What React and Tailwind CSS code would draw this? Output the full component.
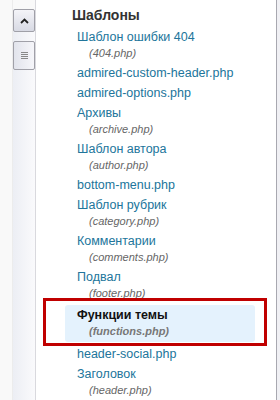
import React from "react";

const items = [
  { name: "Шаблон ошибки 404", sub: "(404.php)" },
  { name: "admired-custom-header.php" },
  { name: "admired-options.php" },
  { name: "Архивы", sub: "(archive.php)" },
  { name: "Шаблон автора", sub: "(author.php)" },
  { name: "bottom-menu.php" },
  { name: "Шаблон рубрик", sub: "(category.php)" },
  { name: "Комментарии", sub: "(comments.php)" },
  { name: "Подвал", sub: "(footer.php)" },
  { name: "Функции темы", sub: "(functions.php)", active: true },
  { name: "header-social.php" },
  { name: "Заголовок", sub: "(header.php)" },
];

function Item({ it }) {
  if (it.active) {
    return (
      <li className="relative my-[2px] rounded-[3px] bg-[#e4f2fd] pt-[2px] pb-[3px]">
        <div className="pl-[12px] text-[12.5px] font-bold leading-[16px] text-[#111]">{it.name}</div>
        <div className="pl-[24px] text-[11px] font-bold italic leading-[16px] text-[#777]">{it.sub}</div>
        <div className="pointer-events-none absolute left-[-22px] right-[-12px] top-[-7px] bottom-[-4px] border-[3px] border-[#c00000]" />
      </li>
    );
  }
  return (
    <li className="py-[2px]">
      <div className="pl-[12px] text-[12.5px] leading-[16px] text-[#21759b]">{it.name}</div>
      {it.sub && (
        <div className="pl-[24px] text-[11px] italic leading-[16px] text-[#666]">{it.sub}</div>
      )}
    </li>
  );
}

export default function App() {
  return (
    <div
      className="flex h-[400px] w-[280px] overflow-hidden bg-white"
      style={{ fontFamily: '"Liberation Sans", Arial, sans-serif' }}
    >
      <div className="w-[13px] shrink-0 border-r border-[#ececec] bg-[#f9f9f9]" />
      <div className="flex w-[23px] shrink-0 flex-col border-r border-[#d9d9de] bg-gradient-to-r from-[#eceef4] to-[#fafafc]">
        <div className="h-[9px] bg-[#f9f9f9]" />
        <div className="flex h-[23px] items-center justify-center rounded-[2px] border border-[#a0a0a8] bg-gradient-to-b from-[#f4f4f8] to-[#d8dae4]">
          <svg width="9" height="6" viewBox="0 0 9 6">
            <path d="M1 5 L4.5 1.5 L8 5" fill="none" stroke="#222" strokeWidth="1.8" />
          </svg>
        </div>
        <div className="h-[9px]" />
        <div className="flex h-[29px] flex-col items-center justify-center gap-[1px] rounded-[2px] border border-[#a0a0a8] bg-gradient-to-r from-[#e2e4ec] to-[#f6f6fa]">
          <div className="h-px w-[7px] bg-[#888]" />
          <div className="h-px w-[7px] bg-[#888]" />
          <div className="h-px w-[7px] bg-[#888]" />
          <div className="h-px w-[7px] bg-[#888]" />
        </div>
        <div className="flex-1" />
      </div>
      <div className="flex w-[240px] shrink-0 flex-col">
        <div className="mt-[6px] pl-[36px] text-[14px] font-bold leading-[18px] text-[#333]">Шаблоны</div>
        <ul className="mt-[3px] ml-[29px] mr-[21px]">
          {items.map((it, i) => (
            <Item key={i} it={it} />
          ))}
        </ul>
      </div>
      <div className="w-px shrink-0 bg-[#a8a8b0]" />
      <div className="flex-1 bg-[#f0f0f4]" />
    </div>
  );
}
